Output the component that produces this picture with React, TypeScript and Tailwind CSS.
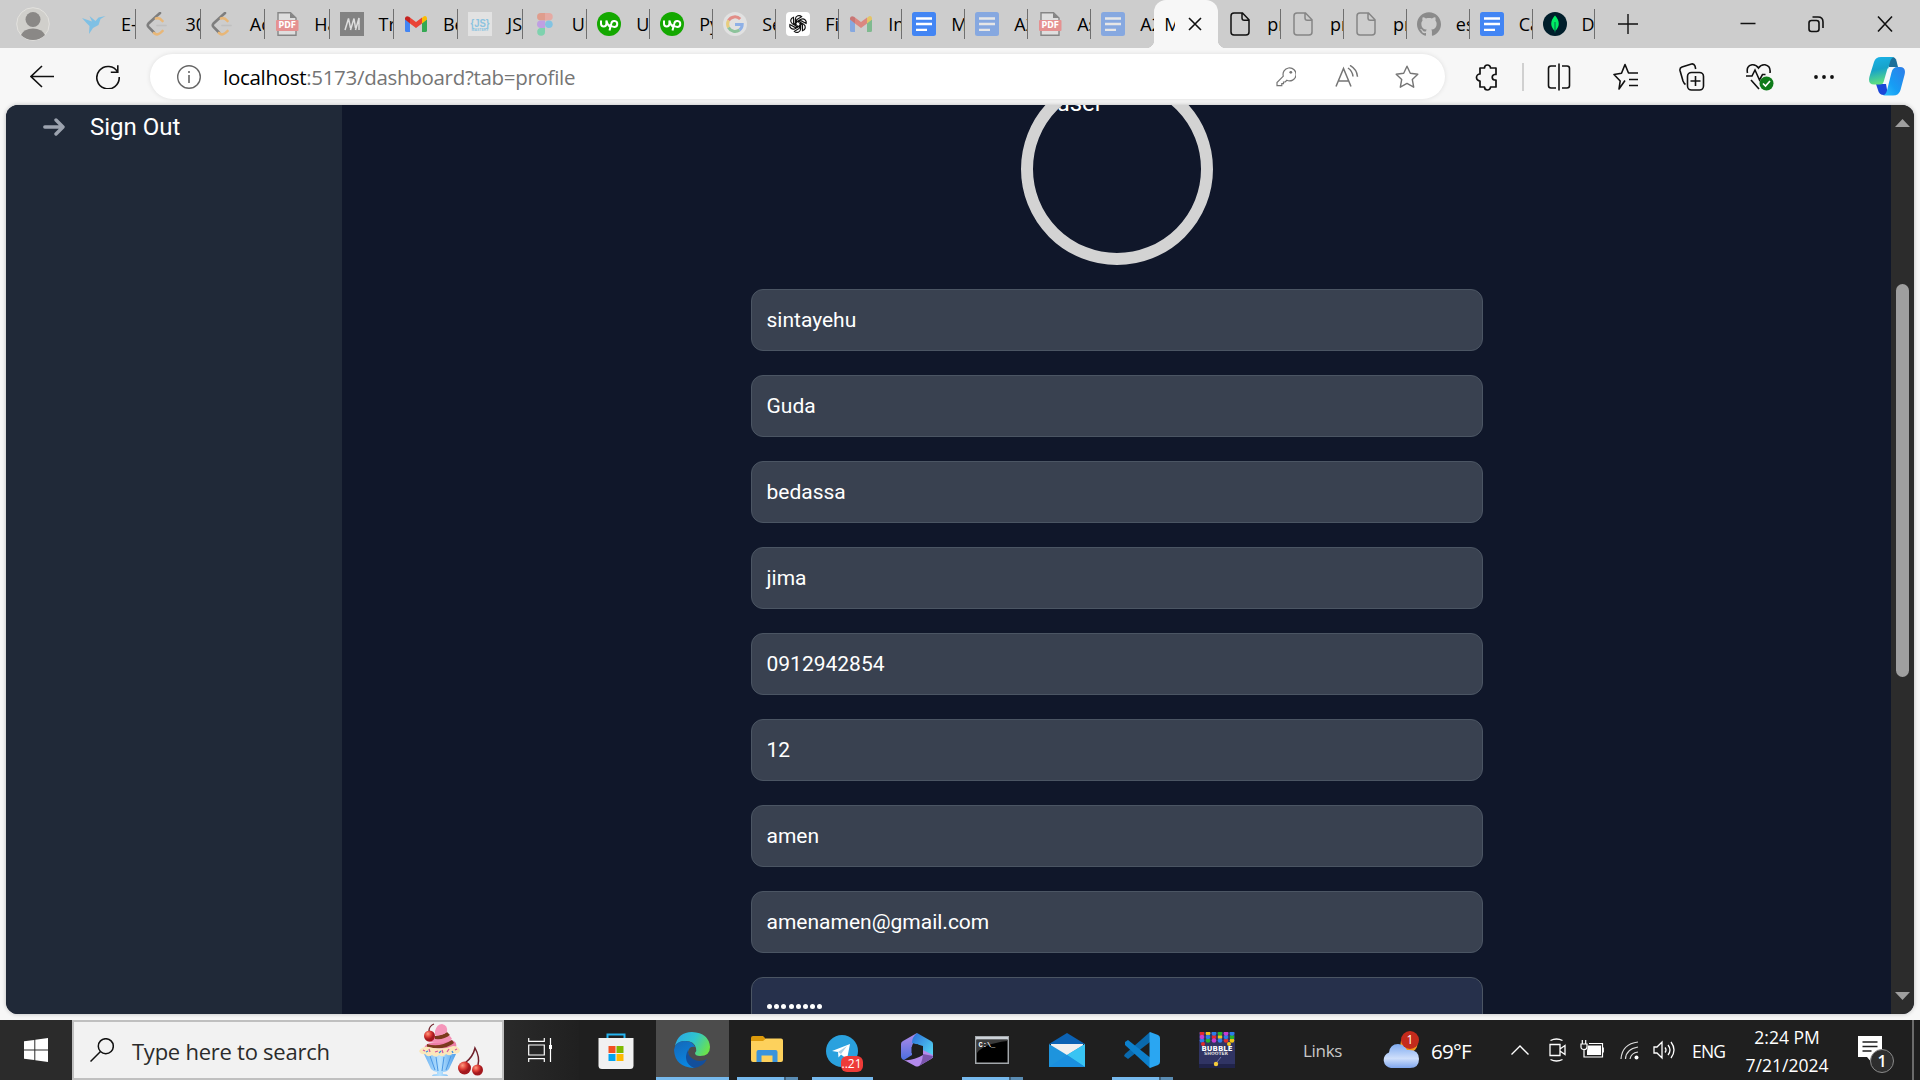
import React from "react";
import { SiGithub } from "react-icons/si";

const ui = "font-['Open_Sans','Noto_Sans',sans-serif]";

/* ---------- favicons (24x24) ---------- */
const Svg = ({ children, className = "w-6 h-6", vb = "0 0 24 24" }: any) => (
  <svg viewBox={vb} className={"block shrink-0 " + className} fill="none">
    {children}
  </svg>
);

const Bird = () => (
  <Svg>
    <path d="M0 6l10 3.500L7.500 4l6 5 3-3.500L23.500 4l-5 3-2 6-5.500 3-4 6 .5-8-3-3z" fill="#7fc0e4" />
  </Svg>
);
const Leet = () => (
  <Svg>
    <path d="M14 1L2.500 11.500q-1.500 1.700 0 3.400L8 20.500" stroke="#7e7e7e" strokeWidth="2.600" strokeLinecap="round" />
    <path d="M10 6.500q3-1.500 6.500 2.500M8 21q3.500 3.500 8.500-2" stroke="#e8b778" strokeWidth="2.600" strokeLinecap="round" />
    <path d="M11 13.500h9" stroke="#c0c0c0" strokeWidth="1.600" strokeLinecap="round" />
  </Svg>
);
const Pdf = () => (
  <Svg>
    <path d="M3 10V.8h12.500L21 6v4M3 18v5.200h18V18" fill="#dedede" stroke="#858585" strokeWidth="1.400" />
    <path d="M15 .8V6h6z" fill="#858585" />
    <rect x="1" y="8" width="22.500" height="11" rx="1" fill="#e59191" />
    <text x="3.500" y="16.400" fontSize="8" fontWeight="700" fill="#fff" fontFamily="DejaVu Sans" textLength="17.500" lengthAdjust="spacingAndGlyphs">PDF</text>
  </Svg>
);
const Medium = () => (
  <Svg>
    <path d="M0 0h24v24H0z" fill="#828282" />
    <path d="M5 18L8.500 6.500l2 9.500M10.500 18L14 6.500l1.500 9.500M15.500 18L19 6v12" stroke="#dedede" strokeWidth="1.500" />
  </Svg>
);
const Gmail = ({ className = "" }: any) => (
  <Svg className={"w-6 h-6 " + className}>
    <path d="M1 7v11.500q0 1.500 1.500 1.500H6v-9z" fill="#4285f4" />
    <path d="M18 11v9h3.500q1.500 0 1.500-1.500V7z" fill="#34a853" />
    <path d="M18 6v5.500l5-4V6q-1-3.500-4-1z" fill="#fbbc04" />
    <path d="M6 5.500v6l6 4.500 6-4.500v-6L12 10z" fill="#ea4335" />
    <path d="M1 6v1.500l5 4v-6L5 4.700Q2 3.200 1 6z" fill="#c5221f" />
  </Svg>
);
const JsMastery = () => (
  <Svg>
    <path d="M0 0h24v24H0z" fill="#e2e2e2" />
    <text x="2.500" y="14.500" fontSize="11.500" fill="#8cc3e0" fontFamily="Liberation Sans" fontWeight="700" textLength="19" lengthAdjust="spacingAndGlyphs">{"{JS}"}</text>
    <text x="3.500" y="18.800" fontSize="3.800" fill="#8cc3e0" fontFamily="Liberation Sans" fontWeight="700" textLength="17" lengthAdjust="spacingAndGlyphs">MASTERY</text>
  </Svg>
);
const Figma = () => (
  <Svg>
    <path d="M12 1H7.800a3.700 3.700 0 0 0 0 7.500H12z" fill="#df9d8d" />
    <path d="M12 1h4a3.700 3.700 0 0 1 0 7.500h-4z" fill="#e5aaa3" />
    <path d="M12 8.500H7.800a3.700 3.700 0 0 0 0 7.500H12z" fill="#bf9fe2" />
    <circle cx="15.900" cy="12.200" r="3.800" fill="#82c3e2" />
    <path d="M12 16H7.800a3.900 3.900 0 1 0 4.200 4z" fill="#7ed2ae" />
  </Svg>
);
const Upwork = () => (
  <Svg>
    <circle cx="12" cy="12" r="12" fill="#14a800" />
    <path d="M4 8.500v3.300a2.700 2.700 0 0 0 5.400 0V8.500c1 3.500 2.600 6 4.400 6.500M12.500 18.500l1.800-7a3 3 0 1 1 3 3.500c-1.700 0-3.200-.8-4.600-2.600" stroke="#fff" strokeWidth="2" />
  </Svg>
);
const Google = () => (
  <Svg>
    <circle cx="12" cy="12" r="12" fill="#e1e1e1" />
    <path d="M17.200 7A7.500 7.500 0 0 0 5.500 8.500" stroke="#e28d87" strokeWidth="3" />
    <path d="M5.500 8.500a7.500 7.500 0 0 0 0 7" stroke="#e8cd7d" strokeWidth="3" />
    <path d="M5.500 15.500a7.500 7.500 0 0 0 11 2.500" stroke="#8dc39b" strokeWidth="3" />
    <path d="M16.500 18a7.200 7.200 0 0 0 2.700-5.500H12" stroke="#8eb0e6" strokeWidth="3" />
  </Svg>
);
const Gpt = () => (
  <Svg>
    <rect width="24" height="24" rx="4" fill="#fff" />
    <g stroke="#111" strokeWidth="1.200">
      {[0, 60, 120, 180, 240, 300].map((a) => (
        <path key={a} transform={`rotate(${a} 12 12)`} d="M9.400 13.600V7a3.600 3.600 0 0 1 6.200-2.300L11 7.500q-.6.400-.6 1v3" />
      ))}
    </g>
  </Svg>
);
const Docs = ({ className = "" }: any) => (
  <Svg className={"w-6 h-6 " + className}>
    <rect width="24" height="24" rx="2.500" fill="#4285f4" />
    <path d="M4 6.500h16M4 12h16M4 17.800h11" stroke="#fff" strokeWidth="2.300" />
  </Svg>
);
const FileIc = ({ c = "#858585" }: any) => (
  <Svg>
    <path d="M6 1h8.500L21 7.800V20q0 3-3 3H6q-3 0-3-3V4q0-3 3-3zM14 1v5q0 2.300 2.300 2.300H21" stroke={c} strokeWidth="1.500" />
  </Svg>
);
const Mongo = () => (
  <Svg>
    <circle cx="12" cy="12" r="12" fill="#001e2b" />
    <path d="M12 3.500c5 5 5 11.500 0 15.500-5-4-5-10.500 0-15.500z" fill="#00ed64" />
    <path d="M12 10v10.500" stroke="#00684a" strokeWidth="1" />
  </Svg>
);

const tabs: { i: React.ReactNode; t: string; w?: boolean; active?: boolean }[] = [
  { i: <Bird />, t: "E-", w: true },
  { i: <Leet />, t: "30", w: true },
  { i: <Leet />, t: "Ac", w: true },
  { i: <Pdf />, t: "Ha", w: true },
  { i: <Medium />, t: "Tr", w: true },
  { i: <Gmail />, t: "Be", w: true },
  { i: <JsMastery />, t: "JS", w: true },
  { i: <Figma />, t: "Ur", w: true },
  { i: <Upwork />, t: "U" },
  { i: <Upwork />, t: "Py" },
  { i: <Google />, t: "Se" },
  { i: <Gpt />, t: "Fi" },
  { i: <Gmail className="opacity-50" />, t: "In" },
  { i: <Docs />, t: "M" },
  { i: <Docs className="opacity-50" />, t: "A2" },
  { i: <Pdf />, t: "As" },
  { i: <Docs className="opacity-50" />, t: "A2" },
  { i: null, t: "M", active: true },
  { i: <FileIc c="#111" />, t: "pr" },
  { i: <FileIc />, t: "pr" },
  { i: <FileIc />, t: "pr" },
  { i: <SiGithub className="w-6 h-6 shrink-0 text-[#8b8b8b]" />, t: "es" },
  { i: <Docs />, t: "Ca" },
  { i: <Mongo />, t: "Da" },
];

const TabStrip = () => (
  <div className="flex h-12 shrink-0 items-center bg-[#cdcdcd] text-black">
    <div className="flex w-[72px] shrink-0 pl-4">
      <Svg className="w-[34px] h-[34px]" vb="0 0 34 34">
        <circle cx="17" cy="17" r="16.300" fill="#d0cfcb" stroke="#e3e2de" strokeWidth="1" />
        <circle cx="17" cy="12.500" r="7.500" fill="#8a8886" />
        <path d="M5 28Q8 21.500 17 21.500T29 28Q24 33 17 33T5 28z" fill="#8a8886" />
      </Svg>
    </div>
    {tabs.map((t, k) =>
      t.active ? (
        <div key={k} className="relative flex h-12 w-16 shrink-0 items-center rounded-t-xl bg-[#f7f7f7] pl-[10px]">
          <span className="absolute bottom-0 -left-2 h-2 w-2 bg-[radial-gradient(circle_at_0_0,transparent_8px,#f7f7f7_8.5px)]" />
          <span className="absolute bottom-0 -right-2 h-2 w-2 bg-[radial-gradient(circle_at_100%_0,transparent_8px,#f7f7f7_8.5px)]" />
          <span className="w-[11px] overflow-hidden text-[18px] leading-6">M</span>
          <Svg className="ml-[13px] w-[14px] h-[14px]" vb="0 0 14 14">
            <path d="M1 1l12 12M13 1L1 13" stroke="#111" strokeWidth="1.600" />
          </Svg>
        </div>
      ) : (
        <div
          key={k}
          className={
            "flex h-[30px] shrink-0 items-center overflow-hidden pl-[10px] " +
            (t.w ? "w-[64.4px] " : k > 17 ? "w-[62.9px] " : "w-[63px] ") +
            (k === 16 ? "" : "border-r border-[#6f6f6f]")
          }
        >
          {t.i}
          <span className="ml-[15px] w-10 shrink-0 text-[18px] leading-6">{t.t}</span>
        </div>
      )
    )}
    <Svg className="ml-[22px] w-[22px] h-[22px]" vb="0 0 22 22">
      <path d="M11 1v20M1 11h20" stroke="#111" strokeWidth="1.400" />
    </Svg>
    <div className="ml-auto flex items-center pr-[27px]">
      <Svg className="w-[16px] h-4" vb="0 0 16 16">
        <path d="M0.500 7.500h15" stroke="#111" strokeWidth="1.500" />
      </Svg>
      <Svg className="ml-[52px] w-4 h-[18px]" vb="0 0 16 18">
        <rect x="1" y="5.500" width="10" height="11" rx="2.500" stroke="#111" strokeWidth="1.600" />
        <path d="M4.500 2H10q5 0 5 5v6" stroke="#111" strokeWidth="1.600" />
      </Svg>
      <Svg className="ml-[53px] w-4 h-[18px]" vb="0 0 16 18">
        <path d="M1 1.500l14 15M15 1.500L1 16.500" stroke="#111" strokeWidth="1.600" />
      </Svg>
    </div>
  </div>
);

const Toolbar = () => (
  <div className="flex h-[57px] shrink-0 items-center bg-[#f7f7f7] text-[#111]">
    <Svg className="ml-[30px] w-6 h-6">
      <path d="M24 11.500H1M12 1L1 11.500l11 10.500" stroke="#111" strokeWidth="1.600" />
    </Svg>
    <Svg className="ml-[42px] w-6 h-6">
      <path d="M21.800 7.200A11.200 11.200 0 1 0 23.200 12M21.800 .3v6.900h-7" stroke="#111" strokeWidth="1.600" />
    </Svg>
    <div className="ml-[30px] flex h-[45px] w-[1295px] items-center rounded-full bg-white pl-[27px] shadow-[0_0_5px_rgba(0,0,0,0.10)]">
      <Svg className="w-6 h-6">
        <circle cx="12" cy="12" r="11.300" stroke="#666" strokeWidth="1.400" />
        <path d="M12 10v8M12 6v2" stroke="#666" strokeWidth="1.600" />
      </Svg>
      <div className="ml-[22px] w-[380px] whitespace-nowrap text-[20.500px] leading-7 tracking-[-0.3px] text-[#757575]">
        <span className="text-black">localhost</span>:5173/dashboard?tab=profile
      </div>
      <Svg className="ml-auto w-5 h-5" vb="0 0 20 20">
        <path d="M12.500 1a6.500 6.500 0 1 1-1.700 12.300L9.200 15H7.500v1.700H5.800v2H1v-3.200l6.300-6.300A6.500 6.500 0 0 1 12.500 1z" stroke="#757575" strokeWidth="1.200" />
        <circle cx="14.800" cy="5.300" r="1.400" fill="#757575" />
      </Svg>
      <Svg className="ml-[39px] w-6 h-6">
        <path d="M1 21.500L8.500 3.500 16 21.500M3.500 16h10M13 3q4.500 3 5 8.500M15 .4q7 4 7.500 11.300" stroke="#757575" strokeWidth="1.500" />
      </Svg>
      <Svg className="ml-[36px] mr-[26px] w-6 h-6">
        <path d="M12 1.200l3.300 7 7.500 1-5.500 5.300 1.400 7.700-6.700-3.800-6.700 3.800 1.400-7.700L1.200 9.200l7.500-1z" stroke="#757575" strokeWidth="1.400" strokeLinejoin="round" />
      </Svg>
    </div>
    <Svg className="ml-[30px] w-[24px] h-7" vb="0 0 24 28">
      <path d="M5 5h4.500a3 3 0 0 1 6 0H21v6.500h-1.500a2.800 2.800 0 0 0 0 5.500H21v7h-5.500a3 3 0 0 1-6 0H5v-6a3.500 3.500 0 0 1 0-7z" stroke="#111" strokeWidth="1.700" strokeLinejoin="round" />
    </Svg>
    <span className="ml-[23px] h-7 w-[1.500px] bg-[#d0d0d0]" />
    <Svg className="ml-[23px] w-6 h-7" vb="0 0 24 28">
      <path d="M9 3H4Q1.500 3 1.500 5.500v17Q1.500 25 4 25h5M15 3h5q2.500 0 2.500 2.500v17Q22.500 25 20 25h-5M12 .5v27" stroke="#111" strokeWidth="1.600" />
    </Svg>
    <Svg className="ml-[42px] w-[26px] h-7" vb="0 0 26 28">
      <path d="M12 17.500l-6 8.500 1.200-8L1 11.500l7.500-1.200L12 1.500l3.500 8.500H25M16 16.500h9M16 22.500h9" stroke="#111" strokeWidth="1.600" strokeLinejoin="round" />
    </Svg>
    <Svg className="ml-[40px] w-[26px] h-7" vb="0 0 26 28">
      <path d="M6.500 21.500Q5 20.500 4 18L1 7.500Q.5 5 3 4L12.500 1q2.500-.5 3.500 2l.7 3" stroke="#111" strokeWidth="1.600" />
      <rect x="8.500" y="9.500" width="16" height="17.500" rx="4" stroke="#111" strokeWidth="1.600" />
      <path d="M16.500 13v10M11.500 18h10" stroke="#111" strokeWidth="1.600" />
    </Svg>
    <Svg className="ml-[41px] w-7 h-7" vb="0 0 28 28">
      <path d="M1.500 10Q0 3 6 1.800q4-.5 6.500 3.200Q15 1.300 19 1.800 25 3 24 10M0 13h6l3-6 4.500 10 3-5.500h3M5 17l8 9" stroke="#111" strokeWidth="1.600" />
      <circle cx="20.500" cy="20.500" r="7" fill="#0f7b1a" />
      <path d="M17 20.500l2.500 2.500 4.500-5" stroke="#fff" strokeWidth="1.700" />
    </Svg>
    <Svg className="ml-[39px] w-[22px] h-6" vb="0 0 22 24">
      <circle cx="3" cy="12" r="1.900" fill="#111" />
      <circle cx="11" cy="12" r="1.900" fill="#111" />
      <circle cx="19" cy="12" r="1.900" fill="#111" />
    </Svg>
    <Svg className="ml-[34px] w-9 h-[39px]" vb="0 0 36 39">
      <defs>
        <linearGradient id="cpa" x1="0" y1="0" x2="0.2" y2="1">
          <stop offset="0" stopColor="#1bb3ea" />
          <stop offset=".5" stopColor="#17a3c9" />
          <stop offset="1" stopColor="#5fe07f" />
        </linearGradient>
        <linearGradient id="cpb" x1="1" y1="0" x2="0" y2="1">
          <stop offset="0" stopColor="#2f7de8" />
          <stop offset=".6" stopColor="#169df4" />
          <stop offset="1" stopColor="#2ec0fb" />
        </linearGradient>
      </defs>
      <path d="M7 27h10l2 11h-4q-5 0-6-5z" fill="#1a47d8" />
      <path d="M20 0h3q3.500 0 4.500 4l1.500 6-9 0z" fill="#1d6f9a" />
      <path d="M12 0h13q-3 1-4 5l-4.500 17q-1.500 5.500-6 5.500H5q-6.500 0-4.500-8L5 5q1.500-5 7-5z" fill="url(#cpa)" />
      <path d="M24 38.500H14q3-1 4-5l4.500-18q1.300-5.500 6-5.500H31q6.500 0 4.500 8L31.500 33q-1.500 5.500-7.500 5.500z" fill="url(#cpb)" />
      <path d="M18.500 11.500h4.500L18.500 27H14z" fill="#f4f9fc" />
    </Svg>
  </div>
);

const fields = ["sintayehu", "Guda", "bedassa", "jima", "0912942854", "12", "amen", "amenamen@gmail.com"];

const Page = () => (
  <div className="h-[915px] shrink-0 bg-[#f7f7f7] px-[6px] pb-[6px]">
    <div className="flex h-[909px] overflow-hidden rounded-xl bg-[#10172a] font-['Roboto',sans-serif] text-white shadow-[0_0_4px_rgba(0,0,0,0.25)]">
      <aside className="w-[336px] shrink-0 bg-[#202938]">
        <div className="flex h-11 items-center pl-[37px]">
          <Svg className="w-[22px] h-[18px]" vb="0 0 22 18">
            <path d="M1.800 9h18M13 2l7 7-7 7" stroke="#9ca3af" strokeWidth="3.400" strokeLinecap="round" strokeLinejoin="round" />
          </Svg>
          <span className="ml-[25px] text-[24px] leading-9">Sign Out</span>
        </div>
      </aside>
      <main className="flex min-w-0 flex-1 flex-col items-center">
        <div className="-mt-8 h-48 w-48 shrink-0 overflow-hidden rounded-full border-[12px] border-[lightgray]">
          <div className="pl-6 text-[24px] leading-9">user</div>
        </div>
        <div className="mt-6 ml-px flex w-[732px] flex-col gap-6">
          {fields.map((f) => (
            <div key={f} className="flex h-[62px] shrink-0 items-center rounded-xl border border-[#4b5563] bg-[#394150] px-[14.500px] text-[21px] leading-[30px]">
              {f}
            </div>
          ))}
          <div className="flex h-[62px] shrink-0 items-center gap-[2.200px] rounded-xl border border-[#4b5563] bg-[#26304b] px-[15px] pb-[4px]">
            {Array.from({ length: 8 }, (_, k) => (
              <span key={k} className="h-[5px] w-[5px] rounded-full bg-white" />
            ))}
          </div>
        </div>
      </main>
      <div className="flex w-[23px] shrink-0 flex-col items-center bg-[#2c2c2c] pt-[14px] pb-[14px]">
        <Svg className="w-[15px] h-2" vb="0 0 15 8">
          <path d="M7.500 0L15 8H0z" fill="#9f9f9f" />
        </Svg>
        <div className="mt-[157px] h-[393px] w-[13px] rounded-full bg-[#9f9f9f]" />
        <Svg className="mt-auto w-[15px] h-2" vb="0 0 15 8">
          <path d="M7.500 8L15 0H0z" fill="#9f9f9f" />
        </Svg>
      </div>
    </div>
  </div>
);

/* ---------- taskbar ---------- */
const Dessert = () => (
  <Svg className="w-[66px] h-[54px]" vb="0 0 66 54">
    <defs>
      <linearGradient id="bowl" x1="0" x2="1">
        <stop offset="0" stopColor="#6fb4f2" />
        <stop offset=".5" stopColor="#b8e2ff" />
        <stop offset="1" stopColor="#4f9fea" />
      </linearGradient>
      <radialGradient id="chry" cx=".35" cy=".3">
        <stop offset="0" stopColor="#ff9a80" />
        <stop offset=".6" stopColor="#dc3b34" />
        <stop offset="1" stopColor="#a3181e" />
      </radialGradient>
    </defs>
    <path d="M6 31l7 15q3 3 6 3v2q-5 0-5 2h16q0-2-5-2v-2q4 0 6-3l7-15z" fill="url(#bowl)" />
    <path d="M12 33l5 14M18 34l2 14M26 34l-2 14M33 33l-5 14" stroke="#4a97e4" strokeWidth="1" />
    <path d="M6 25Q8 20 14 20L33 17q7 1 5 9z" fill="#ee7fa8" />
    <path d="M9 21q12 4 25-4l2 3q-10 8-27 4z" fill="#7b3a1c" />
    <path d="M10 19q4-7 14-8 8 0 10 5-6 6-24 3z" fill="#f48fb4" />
    <path d="M17 13q6 0 12-4l3 3q-6 5-15 4z" fill="#7b3a1c" />
    <path d="M17 8Q19 1 24 1q6 1 5 8-5 4-12 3z" fill="#f596ba" />
    <path d="M1 28q4-5 10-4 12 4 24-1 6 0 7 5-2 4-7 2-3 4-7 1-3 4-7 1-3 3-7 0-4 3-7-1-4 1-6-3z" fill="#fbe7bb" />
    <path d="M5 27l2 1M11 26l1 3M17 29l3-1M24 27l1 3M31 26l-2 3M37 27l2-1" stroke="#d65a9c" strokeWidth="1.300" />
    <path d="M8 29l2-1M21 30l2-2M34 28l1 2" stroke="#3d8fe0" strokeWidth="1.300" />
    <circle cx="11.500" cy="13" r="5.500" fill="url(#chry)" />
    <path d="M11 8Q11 3 16 1" stroke="#70202a" strokeWidth="1.200" />
    <path d="M47 40Q55 34 57 25q5 9 3 17" stroke="#70202a" strokeWidth="1.500" />
    <circle cx="46.500" cy="45" r="6.500" fill="url(#chry)" />
    <circle cx="59.500" cy="47" r="5.500" fill="url(#chry)" />
  </Svg>
);

const TaskButton = ({ children, run, active }: any) => (
  <div className={"flex h-[60px] w-[73px] shrink-0 flex-col items-center " + (active ? "bg-[#4c4c4c]" : "")}>
    <div className="flex h-[57px] w-full items-center justify-center pt-[3px] pr-[2px]">{children}</div>
    {active && <div className="h-[3px] w-full bg-[#76b9ed]" />}
    {run && (
      <div className="flex h-[3px] w-[61px]">
        <div className="h-full flex-1 bg-[#76b9ed]" />
        {run === 2 && <div className="h-full w-[14px] border-l-2 border-[#41617b] bg-[#5a8cb3]" />}
      </div>
    )}
  </div>
);

const Edge = () => (
  <Svg className="w-9 h-9" vb="0 0 36 36">
    <defs>
      <linearGradient id="eg" x1="0" y1=".2" x2="1" y2=".6">
        <stop offset="0" stopColor="#2aa9e6" />
        <stop offset=".5" stopColor="#2fc4cf" />
        <stop offset="1" stopColor="#6be24b" />
      </linearGradient>
      <linearGradient id="eb" x1="0" y1="0" x2=".4" y2="1">
        <stop offset="0" stopColor="#1467b8" />
        <stop offset="1" stopColor="#0a86e0" />
      </linearGradient>
    </defs>
    <path d="M1 14Q4 0 18 0q17 1 18 15 0 9-10 9-5 0-5-3 2-2 1-5Q20 9 12 9 4 9 1 14z" fill="url(#eg)" />
    <path d="M0 18Q1 9 11 9q8 0 10 6-6-1-7 5 0 8 7 11 2 2-1 5Q1 35 0 18z" fill="url(#eb)" />
    <path d="M14 18q-6 12 6 18 9-1 13-9-8 4-14 0-6-4-5-9z" fill="#134f9c" />
  </Svg>
);
const Taskbar = () => (
  <div className="flex h-[60px] shrink-0 items-center bg-[#1f1f1f] text-white">
    <div className="flex h-full w-[72px] shrink-0 items-center justify-center bg-[#2b2b2b]">
      <Svg className="w-6 h-6">
        <path d="M0 3.300L10.300 2v9.500H0zM11.300 1.800L24 0v11.500H11.300zM0 12.500h10.300V22L0 20.700zM11.300 12.500H24V24l-12.700-1.800z" fill="#fff" />
      </Svg>
    </div>
    <div className="flex h-full w-[432px] shrink-0 items-center border-2 border-[#c0c0c0] bg-[#f2f2f2] pl-4">
      <Svg className="w-6 h-6">
        <circle cx="15.800" cy="8.200" r="7.500" stroke="#111" strokeWidth="1.500" />
        <path d="M10.500 13.500L.5 23.500" stroke="#111" strokeWidth="1.500" />
      </Svg>
      <span className="ml-[18px] w-[240px] whitespace-nowrap pt-[2px] text-[22px] leading-7 tracking-[-0.25px] text-[#2b2b2b]">Type here to search</span>
      <div className="ml-auto mr-[18px]">
        <Dessert />
      </div>
    </div>
    <div className="flex h-full w-[75px] shrink-0 items-center bg-gradient-to-r from-[#2a2a2a] to-[#202020] pl-[24px]">
      <Svg className="w-6 h-6">
        <path d="M.7 0v3.300h15.600V0M.7 24v-3.300h15.600V24M.7 7h15.600v10H.7zM22.500 0v24" stroke="#fff" strokeWidth="1.200" />
        <path d="M21 7h3v4h-3z" fill="#fff" />
      </Svg>
    </div>
    <TaskButton>
      <Svg className="ml-[3px] mt-px w-9 h-9" vb="0 0 36 36">
        <path d="M9.500 8V1.500h17V8" stroke="#25b4f0" strokeWidth="2" />
        <path d="M.5 5h35v27.500Q35.500 36 32 36H4Q.5 36 .5 32.500z" fill="#f1f1f1" />
        <path d="M10.500 13h7v7h-7z" fill="#f25022" />
        <path d="M18.500 13h7v7h-7z" fill="#7fba00" />
        <path d="M10.500 21h7v7h-7z" fill="#00a4ef" />
        <path d="M18.500 21h7v7h-7z" fill="#ffb900" />
      </Svg>
    </TaskButton>
    <div className="ml-1 flex gap-[2px]">
      <TaskButton active>
        <Edge />
      </TaskButton>
      <TaskButton run={2}>
        <Svg className="w-8 h-7" vb="0 0 32 28">
          <path d="M0 2q0-2 2-2h10l3 3v4H0z" fill="#dc9a0b" />
          <path d="M0 5h12l3-2.500h15q2 0 2 2V24q0 2-2 2H2q-2 0-2-2z" fill="#fdd15c" />
          <path d="M5.500 26V16q0-2 2-2h17q2 0 2 2v10h-5v-6.500h-11V26z" fill="#3a94dc" />
        </Svg>
      </TaskButton>
      <TaskButton run={1}>
        <div className="relative mt-px">
          <Svg className="w-8 h-8" vb="0 0 32 32">
            <circle cx="16" cy="16" r="16" fill="#2aa1de" />
            <path d="M6 16l18-7-3 15-6-4.500-2.500 3-.5-5.500z" fill="#fff" />
            <path d="M12 17l9-6-6 8z" fill="#a9cfe6" />
          </Svg>
          <span className="absolute -bottom-[5px] left-[15px] flex h-4 w-[22px] items-center justify-center rounded-[6px] bg-[#ee3b38] text-[12px] leading-none">..21</span>
        </div>
      </TaskButton>
      <TaskButton>
        <Svg className="w-8 h-[34px]" vb="0 0 32 34">
          <defs>
            <linearGradient id="oa" x1="0" y1="0" x2="0" y2="1">
              <stop offset="0" stopColor="#b48be8" />
              <stop offset="1" stopColor="#4a6fe0" />
            </linearGradient>
            <linearGradient id="ob" x1="0" y1="0" x2="1" y2="1">
              <stop offset="0" stopColor="#2b6cd8" />
              <stop offset="1" stopColor="#58e0f5" />
            </linearGradient>
          </defs>
          <path d="M16 0L2 8Q0 9 0 11v12q0 3 3 4l8-5V13z" fill="url(#oa)" />
          <path d="M16 0l14 8q2 1 2 3v14l-10-6v-6l-11-3q0-6 5-10z" fill="url(#ob)" />
          <path d="M3 27l11 6q2 1 4 0l12-7q2-1 2-4l-10-5v5q-10 6-19 5z" fill="#b48aec" />
          <path d="M16 34q5-1 6-13l10 2q0 2-2 3l-12 7z" fill="#7b55ad" />
          <path d="M16 11l5.500 3v6L16 23l-5.500-3v-6z" fill="#1f1f1f" />
        </Svg>
      </TaskButton>
      <TaskButton run={2}>
        <Svg className="w-[34px] h-7" vb="0 0 34 28">
          <path d="M.7.700h32.600v26.600H.7z" fill="#000" stroke="#a3a8ac" strokeWidth="1.500" />
          <path d="M1 1h32v2.500H1z" fill="#ccd2d8" />
          <path d="M2 4h30v1Q8 8 2 17z" fill="#3a3a3a" />
          <text x="3.500" y="10.500" fontSize="7" fill="#fff" fontFamily="Liberation Mono" fontWeight="700">{"C:\\_"}</text>
        </Svg>
      </TaskButton>
      <TaskButton>
        <Svg className="w-9 h-[34px]" vb="0 0 36 34">
          <path d="M0 11L18 0l18 11z" fill="#0b62b4" />
          <path d="M2 11h32v6L18 30 2 17z" fill="#f0f0f0" />
          <path d="M0 11l18 11L36 11v23H0z" fill="#1e94dd" />
          <path d="M18 22l18-11v23z" fill="#38c4f3" />
          <path d="M18 22l18 12H0z" fill="#1a8fdf" />
        </Svg>
      </TaskButton>
      <TaskButton run={2}>
        <Svg className="w-9 h-9" vb="0 0 36 36">
          <path d="M1 22l25-22v10L4 27l-4-3z" fill="#0a69ad" />
          <path d="M1 10l3-2 24 19-2 9L1 13z" fill="#0d80cc" />
          <path d="M26 0l8 3q2 1 2 3v24q0 2-2 3l-8 3q-1-1-.5-2V2q-.5-1 .5-2z" fill="#2aa6f2" />
        </Svg>
      </TaskButton>
      <TaskButton>
        <Svg className="w-9 h-9" vb="0 0 36 36">
          <path d="M0 0h36v36H0z" fill="#303463" />
          <path d="M0 32h36v4H0z" fill="#20234a" />
          {["#e22b2b", "#f0c419", "#2b7de9", "#27b52b", "#c93bd0", "#2b7de9"].map((c, i) => (
            <g key={i} fill={c}>
              <circle cx={3 + i * 6} cy="1.500" r="2.300" />
              <circle cx={3 + ((i + 2) % 6) * 6} cy="5" r="2.300" />
              <circle cx={3 + ((i + 4) % 6) * 6} cy="8.500" r="2.300" />
            </g>
          ))}
          <circle cx="4" cy="12" r="2" fill="#e22b2b" />
          <circle cx="30" cy="12" r="2" fill="#f0c419" />
          <text x="2.500" y="18.500" fontSize="7" fontWeight="900" fill="#fff" fontFamily="DejaVu Sans" textLength="31" lengthAdjust="spacingAndGlyphs">BUBBLE</text>
          <text x="5" y="22.500" fontSize="4.500" fontWeight="900" fill="#ddd" fontFamily="DejaVu Sans" textLength="24" lengthAdjust="spacingAndGlyphs">SHOOTER</text>
          <path d="M18 30l4-5" stroke="#777bb0" />
          <circle cx="17" cy="32" r="2.200" fill="#f5cb3c" />
        </Svg>
      </TaskButton>
    </div>
    <span className="ml-[49px] w-[45px] whitespace-nowrap pt-px text-[17px] leading-6 tracking-[-0.3px] text-[#c8c8c8]">Links</span>
    <div className="relative ml-[35px]">
      <Svg className="w-9 h-9" vb="0 0 36 36">
        <defs>
          <linearGradient id="cl" x1="0" y1="0" x2="0" y2="1">
            <stop offset="0" stopColor="#7eaaf0" />
            <stop offset=".6" stopColor="#cfdffb" />
            <stop offset="1" stopColor="#7fa6ee" />
          </linearGradient>
        </defs>
        <circle cx="26" cy="12" r="8.500" fill="#f39a1d" />
        <path d="M8 36a8 8 0 0 1-2-15.500Q7 12 15 12q6 0 9 6 12-1 12 9 0 9-9 9z" fill="url(#cl)" />
      </Svg>
      <span className="absolute -top-[1px] left-[18px] flex h-[18px] w-[18px] items-center justify-center rounded-full bg-[#c42b1c] text-[12px] leading-none">1</span>
    </div>
    <span className="ml-3 w-[47px] whitespace-nowrap pt-px text-[20.500px] leading-7 tracking-[-0.7px]">69°F</span>
    <Svg className="ml-[33px] w-[18px] h-[10px]" vb="0 0 18 10">
      <path d="M.5 9.500L9 1l8.500 8.500" stroke="#fff" strokeWidth="1.400" />
    </Svg>
    <Svg className="ml-5 w-[17px] h-6" vb="0 0 17 24">
      <path d="M1.500 2.500q6-3 12 0M1.500 21.500q6 3 12 0M1 6.500h10v11H1zM11 11l5-3.500v9L11 13" stroke="#fff" strokeWidth="1.300" />
    </Svg>
    <Svg className="ml-[14px] w-6 h-5" vb="0 0 24 20">
      <path d="M8 5.500h13v9.500H7v-4z" fill="#fff" />
      <path d="M23.300 7.500v5M1 4h6v3q0 2.500-3 2.500T1 7zM2.300 4V0M5.700 4V0M4 10v7h18.500V3.500H9" stroke="#fff" strokeWidth="1.200" />
    </Svg>
    <Svg className="ml-4 w-[19px] h-[19px]" vb="0 0 19 19">
      <path d="M1 18Q2 3 18 1M5.500 18Q6 8 18 6M10 18q1-6 8-7" stroke="#ddd" strokeWidth="1.200" />
      <circle cx="16.500" cy="16.500" r="2" fill="#fff" />
    </Svg>
    <Svg className="ml-[14px] w-[23px] h-5" vb="0 0 23 20">
      <path d="M1 7v6h3l5 5V2L4 7zM12 7.500q2 2.500 0 5M15 5q4 5 0 10M18 2q6 8 0 16" stroke="#fff" strokeWidth="1.300" />
    </Svg>
    <span className="ml-[16px] w-[35px] whitespace-nowrap pt-px text-[17.500px] leading-6 tracking-[-0.8px]">ENG</span>
    <div className="ml-[13px] flex w-[94px] flex-col items-center whitespace-nowrap pt-px text-[17.500px] leading-[28px]">
      <span>2:24 PM</span>
      <span>7/21/2024</span>
    </div>
    <div className="relative ml-[24px]">
      <Svg className="w-6 h-7" vb="0 0 24 28">
        <path d="M0 0h24v21h-9l0 7-6-7H0z" fill="#fff" />
        <path d="M4.500 6h15M4.500 10.500h15M4.500 15h9" stroke="#1f1f1f" strokeWidth="1.300" />
      </Svg>
      <span className="absolute top-[13px] left-3 flex h-6 w-6 items-center justify-center rounded-full border border-[#8a8a8a] bg-[#2e2e2e] text-[16px] font-semibold leading-none">1</span>
    </div>
    <span className="ml-auto mr-[6px] h-full w-[2px] bg-[#6b6b6b]" />
  </div>
);

export default function App() {
  return (
    <div className={"flex h-[1080px] w-[1920px] flex-col overflow-hidden bg-[#f7f7f7] " + ui}>
      <TabStrip />
      <Toolbar />
      <Page />
      <Taskbar />
    </div>
  );
}
